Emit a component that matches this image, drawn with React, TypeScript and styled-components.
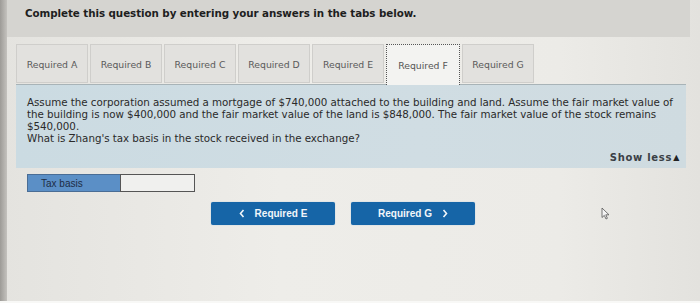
import React from "react";
import styled, { createGlobalStyle } from "styled-components";

const Global = createGlobalStyle`
  html, body { margin: 0; padding: 0; }
  body {
    background: #ebeae6;
    width: 700px;
    height: 303px;
    overflow: hidden;
    font-family: "DejaVu Sans", Verdana, sans-serif;
  }
`;

const Page = styled.div`
  position: relative;
  display: flex;
  width: 700px;
  height: 303px;
  background: linear-gradient(90deg, #e4e3df 0%, #eeede9 40%, #ecebe7 80%, #e3e2de 100%);
  border-bottom: 2px solid #f8f8f6;
  box-sizing: border-box;
`;

const LeftStrip = styled.div`
  width: 7px;
  flex: none;
  background: linear-gradient(90deg, #9d9b97, #c4c2be);
`;

const Main = styled.div`
  flex: 1;
  display: flex;
  flex-direction: column;
  padding-right: 10px;
`;

const Header = styled.div`
  height: 37px;
  background: #d5d4d0;
  display: flex;
  align-items: flex-start;
  padding: 7px 0 0 18px;
  box-sizing: border-box;
`;

const Title = styled.h1`
  margin: 0;
  font-family: "DejaVu Sans", Verdana, sans-serif;
  font-weight: bold;
  font-size: 10.3px;
  color: #1e1e1e;
  letter-spacing: -0.05px;
`;

const Tabs = styled.div`
  display: flex;
  gap: 2px;
  margin: 7px 0 0 9px;
  height: 40px;
  position: relative;
  z-index: 1;
`;

const Tab = styled.div<{ $active?: boolean }>`
  width: ${(p) => (p.$active ? 74 : 72)}px;
  height: ${(p) => (p.$active ? 41 : 39)}px;
  box-sizing: border-box;
  display: flex;
  align-items: center;
  justify-content: center;
  font-family: "DejaVu Sans", Verdana, sans-serif;
  font-size: 9.3px;
  color: ${(p) => (p.$active ? "#555" : "#5a5a5a")};
  background: ${(p) => (p.$active ? "#f3f3f1" : "#e2e1de")};
  border: ${(p) => (p.$active ? "1px dotted #555" : "1px solid #cfcecb")};
  border-bottom: ${(p) => (p.$active ? "none" : "1px solid #cfcecb")};
  padding-top: 1px;
`;

const Panel = styled.div`
  margin: 0 4px 0 9px;
  background: linear-gradient(90deg, #cbdbe2 0%, #d0dde3 60%, #cfdbe0 100%);
  border-top: 1px solid #a8b3b7;
  padding: 11px 6px 5px 11px;
  display: flex;
  flex-direction: column;
`;

const Question = styled.p`
  margin: 0;
  font-family: "DejaVu Sans", Verdana, sans-serif;
  font-size: 10.3px;
  line-height: 12px;
  color: #2a2a2a;
  letter-spacing: -0.03px;
  white-space: nowrap;
`;

const ShowLess = styled.div`
  align-self: flex-end;
  margin-top: 8px;
  font-family: "DejaVu Sans", Verdana, sans-serif;
  font-size: 10px;
  font-weight: bold;
  color: #3a3f45;
  letter-spacing: 0.7px;
  display: flex;
  align-items: center;
  gap: 1px;
`;

const Tri = styled.span`
  font-size: 8px;
  color: #222;
`;

const AnswerRow = styled.div`
  display: flex;
  margin: 6px 0 0 20px;
  height: 18px;
`;

const Label = styled.div`
  width: 93px;
  box-sizing: border-box;
  background: #5b8fc6;
  border: 1px solid #4a6d95;
  border-right: none;
  font-family: "Liberation Sans", Arial, sans-serif;
  font-size: 10px;
  color: #1d2c44;
  display: flex;
  align-items: center;
  padding-left: 13px;
`;

const Input = styled.input`
  width: 75px;
  height: 18px;
  box-sizing: border-box;
  border: 1px solid #555;
  background: #f0f0ee;
  margin: 0;
  padding: 0;
  outline: none;
`;

const Nav = styled.div`
  display: flex;
  gap: 16px;
  margin: 10px 0 0 204px;
`;

const NavButton = styled.button`
  width: 124px;
  height: 23px;
  border: none;
  border-radius: 2px;
  background: #1665a7;
  color: #f2f6fa;
  font-family: "Liberation Sans", Arial, sans-serif;
  font-weight: bold;
  font-size: 10px;
  display: flex;
  align-items: center;
  justify-content: center;
  gap: 10px;
  padding: 0;
  box-shadow: 0 0 1px #7fb0d8;
`;

const Chevron = styled.svg`
  width: 6px;
  height: 9px;
`;

const Cursor = styled.svg`
  position: absolute;
  left: 601px;
  top: 207px;
  width: 9px;
  height: 13px;
`;

const Left = () => (
  <Chevron viewBox="0 0 6 9">
    <path d="M4.5 1 L1.5 4.5 L4.5 8" fill="none" stroke="#f2f6fa" strokeWidth="1.6" />
  </Chevron>
);

const Right = () => (
  <Chevron viewBox="0 0 6 9">
    <path d="M1.5 1 L4.5 4.5 L1.5 8" fill="none" stroke="#f2f6fa" strokeWidth="1.6" />
  </Chevron>
);

const tabs = ["A", "B", "C", "D", "E", "F", "G"];

export default function App() {
  return (
    <>
      <Global />
      <Page>
        <LeftStrip />
        <Main>
          <Header>
            <Title>Complete this question by entering your answers in the tabs below.</Title>
          </Header>
          <Tabs>
            {tabs.map((t) => (
              <Tab key={t} $active={t === "F"}>
                Required {t}
              </Tab>
            ))}
          </Tabs>
          <Panel>
            <Question>
              Assume the corporation assumed a mortgage of $740,000 attached to the building and land. Assume the fair market value of
              <br />
              the building is now $400,000 and the fair market value of the land is $848,000. The fair market value of the stock remains
              <br />
              $540,000.
              <br />
              What is Zhang's tax basis in the stock received in the exchange?
            </Question>
            <ShowLess>
              Show less<Tri>▲</Tri>
            </ShowLess>
          </Panel>
          <AnswerRow>
            <Label>Tax basis</Label>
            <Input type="text" />
          </AnswerRow>
          <Nav>
            <NavButton>
              <Left />
              Required E
            </NavButton>
            <NavButton>
              Required G
              <Right />
            </NavButton>
          </Nav>
        </Main>
        <Cursor viewBox="0 0 9 13">
          <path d="M1 1 L1 10.5 L3.3 8.4 L5 12 L6.4 11.3 L4.8 7.8 L8 7.8 Z" fill="#f4f4f4" stroke="#555" strokeWidth="0.8" />
        </Cursor>
      </Page>
    </>
  );
}
